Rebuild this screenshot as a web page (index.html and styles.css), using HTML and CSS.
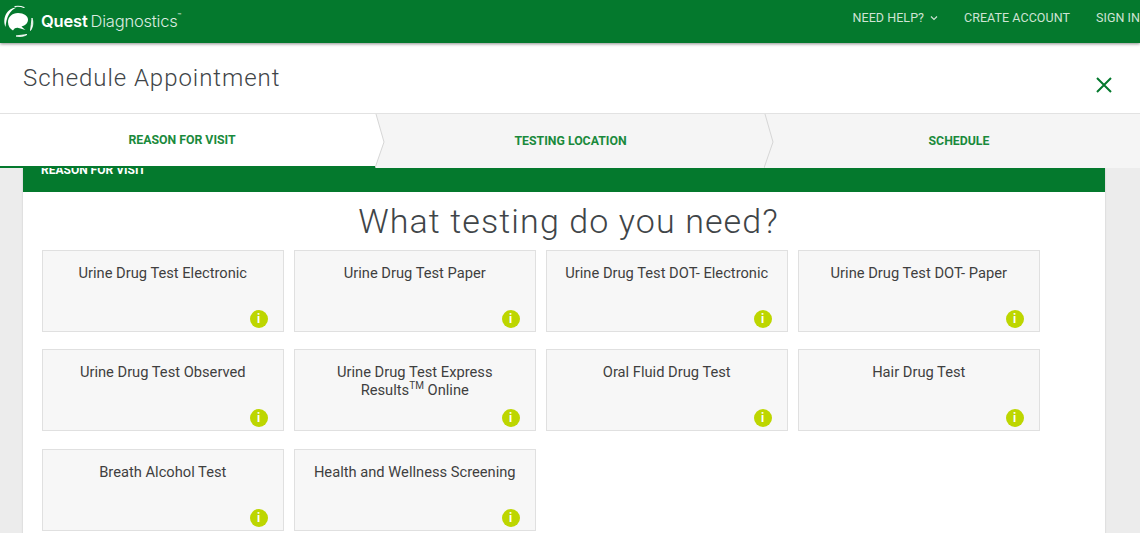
FILE: index.html
```html
<!DOCTYPE html>
<html lang="en">
<head>
<meta charset="utf-8">
<title>Schedule Appointment</title>
<link rel="stylesheet" href="styles.css">
</head>
<body>
<header class="topbar">
  <div class="brand">
    <svg class="logo" width="36" height="36" viewBox="0 0 36 36" aria-hidden="true">
      <path d="M17 10c-6 0-10 4-10 9 0 4 2 7 5 8.500 1.500-2.500 3.500-3 5.500-2.500 3 .8 4.500 1.500 7 2-2-1.500-3-2.500-4-3.500 4-1 6.500-3.500 6.500-7C27 13 23 10 17 10z" fill="#fff"/>
      <path d="M4.500 24C1 15 6 5 15.500 4.500 9 7 5.500 14 4.500 24z" fill="#fff"/>
      <path d="M14 3.500c3-.5 6-.3 9 1" fill="none" stroke="#fff" stroke-width="1.200" stroke-linecap="round"/>
      <path d="M31 15c1.500 4 1 9-1.500 12.500 .6-4 1-8 1.500-12.500z" fill="#fff" stroke="#fff" stroke-width=".8"/>
      <path d="M15 33c4 1 8 .5 11-1.500-3 .4-7 .8-11 1.500z" fill="#fff" stroke="#fff" stroke-width=".8"/>
    </svg>
    <span class="wordmark"><b>Quest</b><span class="thin">Diagnostics</span><sup>™</sup></span>
  </div>
  <nav class="topnav">
    <a class="navlink">NEED HELP?
      <svg class="caret" width="8" height="6" viewBox="0 0 8 6" aria-hidden="true"><path d="M1 1.500l3 3 3-3" fill="none" stroke="#cfe3d4" stroke-width="1.200"/></svg>
    </a>
    <a class="navlink">CREATE ACCOUNT</a>
    <a class="navlink">SIGN IN</a>
  </nav>
</header>
<section class="titlebar">
  <h1 class="title">Schedule Appointment</h1>
  <svg class="close" width="18" height="18" viewBox="0 0 18 18" aria-label="Close"><path d="M2 2l14 14M16 2L2 16" stroke="#04792d" stroke-width="2" fill="none"/></svg>
</section>
<div class="tabs">
  <div class="tab active">REASON FOR VISIT
    <svg class="chev" width="14" height="54" viewBox="0 0 14 54" aria-hidden="true"><path d="M0 0H1L9 28 0 54z" fill="#fff"/><path d="M1 0l8 28-9 26" fill="none" stroke="#d6d6d6"/></svg>
  </div>
  <div class="tab middle">TESTING LOCATION
    <svg class="chev" width="14" height="54" viewBox="0 0 14 54" aria-hidden="true"><path d="M1 0l8 28-9 26" fill="none" stroke="#d6d6d6"/></svg>
  </div>
  <div class="tab last">SCHEDULE</div>
</div>
<main class="panel">
  <div class="panelhead"><span class="paneltext">REASON FOR VISIT</span></div>
  <h2 class="question">What testing do you need?</h2>
  <div class="grid">
    <div class="option"><span>Urine Drug Test Electronic</span><i class="info">i</i></div>
    <div class="option"><span>Urine Drug Test Paper</span><i class="info">i</i></div>
    <div class="option"><span>Urine Drug Test DOT- Electronic</span><i class="info">i</i></div>
    <div class="option"><span>Urine Drug Test DOT- Paper</span><i class="info">i</i></div>
    <div class="option"><span>Urine Drug Test Observed</span><i class="info">i</i></div>
    <div class="option"><span>Urine Drug Test Express<br>Results<sup class="tm">TM</sup> Online</span><i class="info">i</i></div>
    <div class="option"><span>Oral Fluid Drug Test</span><i class="info">i</i></div>
    <div class="option"><span>Hair Drug Test</span><i class="info">i</i></div>
    <div class="option"><span>Breath Alcohol Test</span><i class="info">i</i></div>
    <div class="option"><span>Health and Wellness Screening</span><i class="info">i</i></div>
  </div>
</main>
</body>
</html>
```
FILE: styles.css
```css
html, body {
  margin: 0;
  height: 533px;
  overflow: hidden;
}
body {
  background: #ececec;
  font-family: Roboto, "Liberation Sans", sans-serif;
  color: #3f3f3f;
  width: 1140px;
}
.topbar {
  position: relative;
  z-index: 2;
  height: 43px;
  background: #04792d;
  box-shadow: 0 1px 3px rgba(0, 0, 0, .45);
  display: flex;
  justify-content: space-between;
  align-items: center;
  overflow: hidden;
}
.brand {
  display: flex;
  align-items: center;
  padding-left: 1px;
  padding-bottom: 2px;
  gap: 4px;
}
.logo { display: block; }
.wordmark {
  color: #fff;
  font-size: 16.500px;
  display: flex;
  align-items: flex-start;
  font-family: Inter, Roboto, sans-serif;
  letter-spacing: -.2px;
}
.wordmark b { font-weight: 600; }
.thin { font-weight: 300; margin-left: 3px; color: #dcebe0; }
.wordmark sup { font-size: 6px; line-height: 1; margin-top: 2px; }
.topnav {
  display: flex;
  gap: 26px;
  white-space: nowrap;
  padding-bottom: 8px;
}
.navlink {
  color: #cfe3d4;
  font-size: 12.500px;
  letter-spacing: .05px;
  display: flex;
  align-items: center;
  gap: 6px;
}
.titlebar {
  background: #fff;
  height: 71px;
  border-bottom: 1px solid #e2e2e2;
  box-sizing: border-box;
  display: flex;
  justify-content: space-between;
  align-items: flex-start;
  padding: 0 27px 0 23px;
}
.title {
  margin: 19px 0 0;
  font-size: 24px;
  font-weight: 300;
  color: #3f4548;
  letter-spacing: .95px;
  line-height: 32px;
}
.close { margin-top: 33px; }
.tabs {
  position: relative;
  z-index: 1;
  display: grid;
  grid-template-columns: 376px 389px 375px;
  height: 54px;
  background: #f5f5f5;
}
.tab {
  position: relative;
  display: flex;
  align-items: center;
  justify-content: center;
  color: #1a8a3c;
  font-size: 12.300px;
  font-weight: 700;
  box-sizing: border-box;
}
.tab.active {
  background: #fff;
  border-bottom: 2px solid #04792d;
  padding-right: 12px;
}
.tab.last { padding-left: 13px; }
.chev {
  position: absolute;
  top: 0;
  left: 100%;
  margin-left: -1px;
}
.panel {
  margin: 0 35px 0 23px;
  background: #fff;
  box-shadow: 0 0 2px rgba(0, 0, 0, .15);
  height: 400px;
}
.panelhead {
  height: 24px;
  background: #04792d;
  overflow: hidden;
  padding-left: 18px;
}
.paneltext {
  display: block;
  color: #fff;
  font-size: 12px;
  font-weight: 700;
  line-height: 16px;
  margin-top: -6px;
}
.question {
  margin: 8px 0 0;
  text-align: center;
  font-size: 34px;
  line-height: 42px;
  font-weight: 300;
  color: #3f4548;
  letter-spacing: 1.100px;
  padding-left: 9px;
}
.grid {
  display: grid;
  grid-template-columns: repeat(4, 241.500px);
  grid-auto-rows: 82px;
  column-gap: 10.500px;
  row-gap: 17.400px;
  padding: 8px 0 0 19px;
}
.option {
  position: relative;
  box-sizing: border-box;
  background: #f7f7f7;
  border: 1px solid #e0e0e0;
  text-align: center;
  font-size: 14.700px;
  line-height: 18px;
  padding: 13px 10px 0;
  color: #3f3f3f;
}
.tm {
  font-size: 10px;
  line-height: 0;
}
.info {
  position: absolute;
  right: 15px;
  bottom: 3px;
  width: 18px;
  height: 18px;
  border-radius: 50%;
  background: #bdd600;
  color: #fff;
  font: 700 12px/18px Roboto, sans-serif;
  text-align: center;
}
```
